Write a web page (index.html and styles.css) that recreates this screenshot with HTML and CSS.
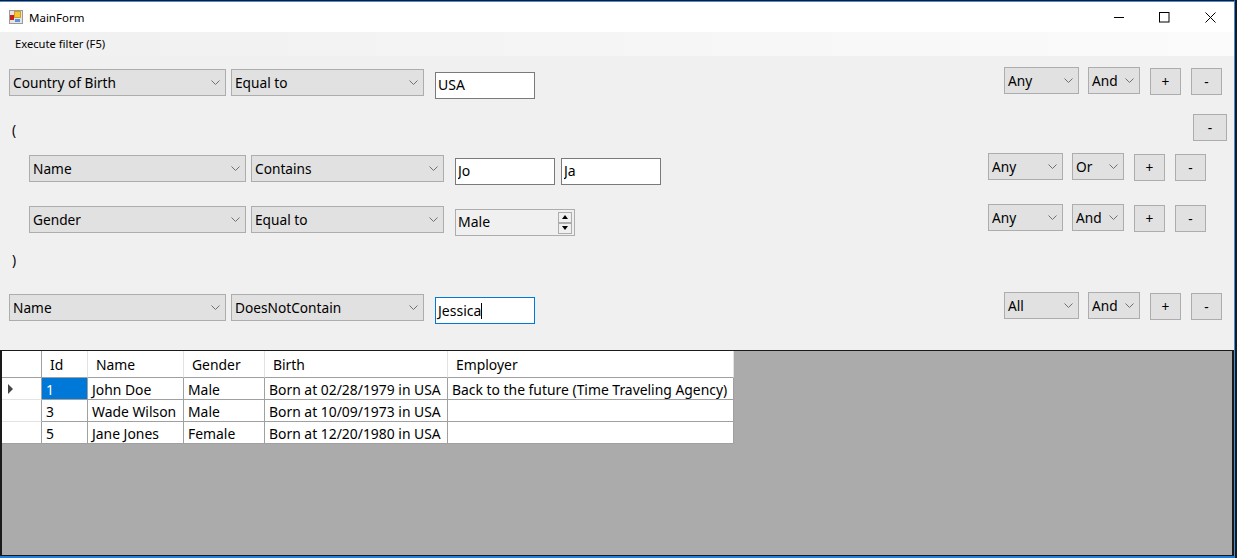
FILE: index.html
```html
<!DOCTYPE html>
<html lang="en">
<head>
    <meta charset="UTF-8">
    <title>MainForm</title>
    <link rel="stylesheet" href="styles.css">
</head>
<body>
    <svg class="defs" width="0" height="0">
        <symbol id="chevron" viewBox="0 0 9 5">
            <path d="M0.5 0.5 L4.5 4.5 L8.5 0.5" fill="none" stroke="#707070" stroke-width="1"/>
        </symbol>
    </svg>

    <div class="window">
        <!-- Title bar -->
        <div class="titlebar">
            <svg class="appicon" width="14" height="14" viewBox="0 0 14 14">
                <rect x="0.5" y="0.5" width="13" height="13" fill="#e4e4e4" stroke="#9a9a9a"/>
                <rect x="1" y="5" width="4" height="5" fill="#c8201c"/>
                <rect x="5.5" y="1.5" width="6" height="6" fill="#f6c532" stroke="#c98f10" stroke-width="0.8"/>
                <rect x="6" y="9" width="5" height="3" fill="#5b94dc"/>
            </svg>
            <span class="title">MainForm</span>
            <div class="winbuttons">
                <svg width="11" height="11" viewBox="0 0 11 11"><path d="M1 5.5 H11" stroke="#000" stroke-width="1"/></svg>
                <svg width="11" height="11" viewBox="0 0 11 11"><rect x="0.5" y="0.5" width="9.5" height="9.5" fill="none" stroke="#000"/></svg>
                <svg width="11" height="11" viewBox="0 0 11 11"><path d="M0.5 0.5 L10.5 10.5 M10.5 0.5 L0.5 10.5" stroke="#000" stroke-width="1"/></svg>
            </div>
        </div>

        <!-- Menu -->
        <div class="menubar"><span class="menuitem">Execute filter (F5)</span></div>

        <!-- Filter rows -->
        <div class="filters">
            <div class="row">
                <div class="combo field">Country of Birth<svg class="chev"><use href="#chevron"/></svg></div>
                <div class="combo oper">Equal to<svg class="chev"><use href="#chevron"/></svg></div>
                <input class="textbox" type="text" value="USA">
                <div class="tools">
                    <div class="combo quant">Any<svg class="chev"><use href="#chevron"/></svg></div>
                    <div class="combo logic">And<svg class="chev"><use href="#chevron"/></svg></div>
                    <button class="btn add">+</button>
                    <button class="btn">-</button>
                </div>
            </div>

            <div class="paren paren-open">
                <span class="paren-text">(</span>
                <button class="btn btn-group">-</button>
            </div>

            <div class="row indented row-second">
                <div class="combo field">Name<svg class="chev"><use href="#chevron"/></svg></div>
                <div class="combo oper">Contains<svg class="chev"><use href="#chevron"/></svg></div>
                <input class="textbox" type="text" value="Jo">
                <input class="textbox textbox-2" type="text" value="Ja">
                <div class="tools">
                    <div class="combo quant">Any<svg class="chev"><use href="#chevron"/></svg></div>
                    <div class="combo logic">Or<svg class="chev"><use href="#chevron"/></svg></div>
                    <button class="btn add">+</button>
                    <button class="btn">-</button>
                </div>
            </div>

            <div class="row indented row-third">
                <div class="combo field">Gender<svg class="chev"><use href="#chevron"/></svg></div>
                <div class="combo oper">Equal to<svg class="chev"><use href="#chevron"/></svg></div>
                <div class="spinner">
                    <span class="spin-value">Male</span>
                    <div class="spin-btns">
                        <div class="spin-btn"><i class="arrow-up"></i></div>
                        <div class="spin-btn"><i class="arrow-down"></i></div>
                    </div>
                </div>
                <div class="tools">
                    <div class="combo quant">Any<svg class="chev"><use href="#chevron"/></svg></div>
                    <div class="combo logic">And<svg class="chev"><use href="#chevron"/></svg></div>
                    <button class="btn add">+</button>
                    <button class="btn">-</button>
                </div>
            </div>

            <div class="paren paren-close"><span>)</span></div>

            <div class="row row-last">
                <div class="combo field">Name<svg class="chev"><use href="#chevron"/></svg></div>
                <div class="combo oper">DoesNotContain<svg class="chev"><use href="#chevron"/></svg></div>
                <div class="textbox focused">Jessica<i class="caret"></i></div>
                <div class="tools">
                    <div class="combo quant">All<svg class="chev"><use href="#chevron"/></svg></div>
                    <div class="combo logic">And<svg class="chev"><use href="#chevron"/></svg></div>
                    <button class="btn add">+</button>
                    <button class="btn">-</button>
                </div>
            </div>
        </div>

        <!-- Results grid -->
        <div class="gridarea">
            <table class="grid">
                <colgroup>
                    <col class="c-head"><col class="c-id"><col class="c-name"><col class="c-gender"><col class="c-birth"><col class="c-employer">
                </colgroup>
                <thead>
                    <tr><th></th><th>Id</th><th>Name</th><th>Gender</th><th>Birth</th><th>Employer</th></tr>
                </thead>
                <tbody>
                    <tr>
                        <td class="rowhead"><i class="current"></i></td>
                        <td class="selected">1</td><td>John Doe</td><td>Male</td><td>Born at 02/28/1979 in USA</td><td>Back to the future (Time Traveling Agency)</td>
                    </tr>
                    <tr>
                        <td class="rowhead"></td>
                        <td>3</td><td>Wade Wilson</td><td>Male</td><td>Born at 10/09/1973 in USA</td><td></td>
                    </tr>
                    <tr>
                        <td class="rowhead"></td>
                        <td>5</td><td>Jane Jones</td><td>Female</td><td>Born at 12/20/1980 in USA</td><td></td>
                    </tr>
                </tbody>
            </table>
        </div>
    </div>
</body>
</html>
```

FILE: styles.css
```css
/* Page and window frame */
html, body {
    margin: 0;
    padding: 0;
    height: 100%;
    overflow: hidden;
}

body {
    background: #1a1a1a;
    font-family: "Noto Sans", "Open Sans", sans-serif;
    font-size: 13.7px;
    color: #000;
}

.defs {
    display: block;
    height: 0;
}

.window {
    box-sizing: border-box;
    width: 1235px;
    height: 558px;
    display: flex;
    flex-direction: column;
    border-top: 1px solid #1a1a1a;
    box-shadow: inset 0 1px 0 #3a8ee6;
    background: #f0f0f0;
    border-right: 1px solid #3a8ee6;
    border-bottom: 2px solid #1f7fe0;
}

/* Title bar */
.titlebar {
    height: 31px;
    flex: none;
    box-sizing: border-box;
    display: flex;
    align-items: center;
    padding-left: 9px;
    padding-top: 1px;
    background: linear-gradient(to bottom, #3a8ee6 1px, #fff 1px);
}

.appicon {
    margin-right: 6px;
}

.title {
    font-size: 11.5px;
}

.winbuttons {
    margin-left: auto;
    display: flex;
    gap: 35px;
    padding-right: 18px;
}

/* Menu */
.menubar {
    height: 24px;
    flex: none;
    box-sizing: border-box;
    display: flex;
    align-items: center;
    padding-left: 15px;
    padding-bottom: 2px;
    font-size: 11.2px;
    background: linear-gradient(to right, #f0f0f0, #fbfbfb);
}

/* Filter panel */
.filters {
    height: 294px;
    flex: none;
    box-sizing: border-box;
    padding-top: 11px;
    background: #f0f0f0;
}

.row {
    display: flex;
    align-items: flex-start;
    height: 32px;
    padding-left: 9px;
    padding-right: 12px;
}

.indented {
    padding-left: 29px;
    padding-right: 28px;
}

.row-second {
    margin-top: 12px;
}

.row-third {
    margin-top: 19px;
}

.row-last {
    margin-top: 18px;
}

.paren {
    display: flex;
    align-items: center;
    height: 27px;
    padding-left: 12px;
    padding-right: 7px;
}

.paren-open {
    margin-top: 15px;
}

.paren-text {
    padding-top: 4px;
}

.paren-close {
    margin-top: 11px;
    padding-bottom: 2px;
    box-sizing: border-box;
}

.combo {
    box-sizing: border-box;
    height: 27px;
    display: flex;
    align-items: center;
    justify-content: space-between;
    padding: 0 5px 1px 3px;
    background: #e1e1e1;
    border: 1px solid #adadad;
}

.chev {
    width: 9px;
    height: 5px;
    flex: none;
}

.field {
    width: 217px;
    margin-top: 2px;
}

.oper {
    width: 193px;
    margin-top: 2px;
    margin-left: 5px;
}

.textbox {
    box-sizing: border-box;
    width: 100px;
    height: 27px;
    margin: 5px 0 0 11px;
    padding: 0 2px 2px;
    font: inherit;
    font-size: 14px;
    color: #000;
    background: #fff;
    border: 1px solid #7a7a7a;
    border-radius: 0;
    outline: none;
}

.textbox-2 {
    margin-left: 6px;
}

.focused {
    display: flex;
    align-items: center;
    padding-bottom: 0;
    border-color: #0078d7;
}

.caret {
    width: 1px;
    height: 16px;
    background: #000;
}

.spinner {
    box-sizing: border-box;
    width: 120px;
    height: 27px;
    margin: 5px 0 0 11px;
    padding: 0 1px 0 2px;
    display: flex;
    align-items: center;
    justify-content: space-between;
    font-size: 14px;
    border: 1px solid #adadad;
    background: #f0f0f0;
}

.spin-value {
    padding-bottom: 3px;
}

.spin-btns {
    display: flex;
    flex-direction: column;
    margin-right: 1px;
}

.spin-btn {
    box-sizing: border-box;
    width: 14px;
    height: 11px;
    display: flex;
    align-items: center;
    justify-content: center;
    background: #f0f0f0;
    border: 1px solid #adadad;
}

.arrow-up {
    border: 3.5px solid transparent;
    border-top: 0;
    border-bottom: 4px solid #000;
}

.arrow-down {
    border: 3.5px solid transparent;
    border-bottom: 0;
    border-top: 4px solid #000;
}

/* Right hand tools on each row */
.tools {
    margin-left: auto;
    display: flex;
    align-items: flex-start;
}

.quant {
    width: 75px;
}

.logic {
    width: 52px;
    margin-left: 9px;
}

.btn {
    box-sizing: border-box;
    width: 31px;
    height: 27px;
    margin-top: 1px;
    margin-left: 10px;
    padding: 0;
    font: inherit;
    color: #000;
    background: #e1e1e1;
    border: 1px solid #adadad;
}

.btn-group {
    width: 34px;
    margin: 0 0 0 auto;
}

/* Results grid */
.gridarea {
    flex: 1;
    min-height: 0;
    background: #ababab;
    border: 1px solid #1a1a1a;
    border-left-width: 2px;
    border-right-width: 2px;
    font-size: 13.9px;
}

.grid {
    table-layout: fixed;
    width: 732px;
    border-collapse: separate;
    border-spacing: 0;
    background: #fff;
}

.c-head { width: 40px; }
.c-id { width: 46px; }
.c-name { width: 96px; }
.c-gender { width: 81px; }
.c-birth { width: 183px; }
.c-employer { width: 286px; }

.grid th {
    box-sizing: border-box;
    height: 27px;
    padding: 1px 0 0 8px;
    font-weight: normal;
    text-align: left;
    border-right: 1px solid #e3e3e3;
    border-bottom: 1px solid #a0a0a0;
}

.grid td {
    box-sizing: border-box;
    height: 22px;
    padding: 2px 0 0 4px;
    white-space: nowrap;
    border-right: 1px solid #a0a0a0;
    border-bottom: 1px solid #a0a0a0;
}

.grid th:first-child {
    border-right-color: #a0a0a0;
}

.grid .rowhead {
    padding: 0 0 0 6px;
    border-bottom-color: #e3e3e3;
}

.grid tr:last-child td {
    border-bottom-color: #a0a0a0;
}

.grid .selected {
    background: #0078d7;
    color: #fff;
}

.current {
    display: block;
    width: 0;
    height: 0;
    border-top: 5px solid transparent;
    border-bottom: 5px solid transparent;
    border-left: 5px solid #444;
}
```
